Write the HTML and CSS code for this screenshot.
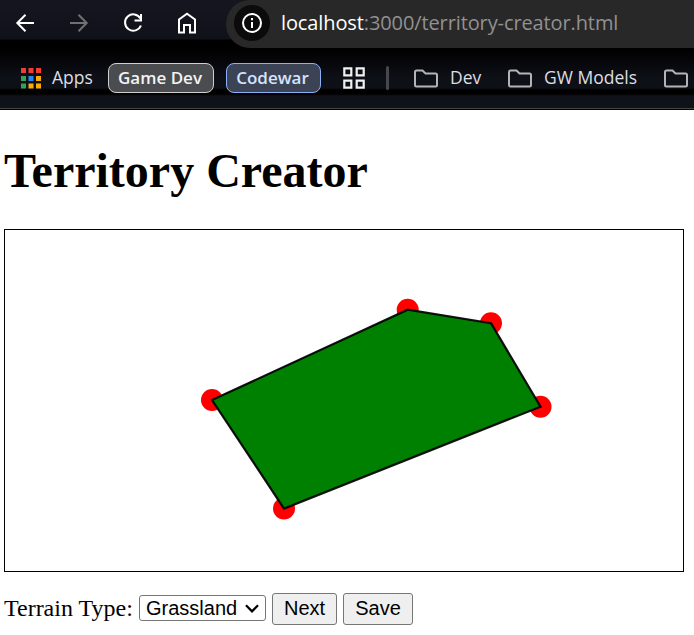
FILE: index.html
```html
<!DOCTYPE html>
<html lang="en">
<head>
<meta charset="utf-8">
<title>Territory Creator</title>
<link rel="stylesheet" href="styles.css">
</head>
<body>
<header class="browser">
  <nav class="toolbar">
    <svg class="nav-icons" width="226" height="46" viewBox="0 0 226 46" fill="none" stroke="#fff" stroke-width="2">
      <path d="M34 23H18M25.500 14.800L17.300 23L25.500 31.200"/>
      <path stroke="#707175" d="M70 23H86M78.500 14.800L86.700 23L78.500 31.200"/>
      <path d="M140.400 18.500A8.200 8.200 0 1 0 140.900 25.500M141 14V20.500H134.500"/>
      <path d="M179 32.500V19.500L187 13.700L195 19.500V32.500H190V25H184V32.500Z"/>
    </svg>
    <div class="address">
      <span class="site-info">
        <svg width="20" height="20" viewBox="0 0 20 20" fill="none" stroke="#fff" stroke-width="2"><circle cx="10" cy="10" r="9"/><path d="M10 9V15M10 5V7.200"/></svg>
      </span>
      <span class="url"><span class="host">localhost</span>:3000/territory-creator.html</span>
    </div>
  </nav>
  <nav class="bookmarks">
    <svg class="apps-icon" width="20" height="21" viewBox="0 0 20 21">
      <path fill="#f03c35" d="M0 0h5v5H0zM7.500 0h5v5h-5zM15 0h5v5h-5z"/>
      <path fill="#34a156" d="M0 8h5v5H0zM0 15.500h5v5H0z"/>
      <path fill="#2787f5" d="M7.500 8h5v5h-5z"/>
      <path fill="#f9ab0b" d="M15 8h5v5h-5zM7.500 15.500h5v5h-5zM15 15.500h5v5h-5z"/>
    </svg>
    <span class="label apps">Apps</span>
    <span class="group game">Game Dev</span>
    <span class="group code">Codewar</span>
    <svg class="grid-icon" width="22" height="22" viewBox="0 0 22 22" fill="none" stroke="#f1f1f1" stroke-width="2.200"><path d="M1.300 1.300h7v7h-7zM13.700 1.300h7v7h-7zM1.300 13.700h7v7h-7zM13.700 13.700h7v7h-7z"/></svg>
    <span class="divider"></span>
    <svg class="folder" width="24" height="19" viewBox="0 0 24 19"><path d="M2.500 1.500H8.500L11.500 4.500H21.500Q23 4.500 23 6V16Q23 17.500 21.500 17.500H2.500Q1 17.500 1 16V3Q1 1.500 2.500 1.500Z"/></svg>
    <span class="label dev">Dev</span>
    <svg class="folder" width="24" height="19" viewBox="0 0 24 19"><path d="M2.500 1.500H8.500L11.500 4.500H21.500Q23 4.500 23 6V16Q23 17.500 21.500 17.500H2.500Q1 17.500 1 16V3Q1 1.500 2.500 1.500Z"/></svg>
    <span class="label models">GW Models</span>
    <svg class="folder" width="24" height="19" viewBox="0 0 24 19"><path d="M2.500 1.500H8.500L11.500 4.500H21.500Q23 4.500 23 6V16Q23 17.500 21.500 17.500H2.500Q1 17.500 1 16V3Q1 1.500 2.500 1.500Z"/></svg>
  </nav>
</header>
<main>
  <h1>Territory Creator</h1>
  <svg class="map" viewBox="0 0 678 341">
    <g fill="red"><circle cx="207" cy="170" r="11"/><circle cx="402.700" cy="79.700" r="11"/><circle cx="486" cy="93.200" r="11"/><circle cx="535.500" cy="176.700" r="11"/><circle cx="279" cy="278.500" r="11"/></g>
    <path fill="green" stroke="#000" stroke-opacity=".92" stroke-width="2.250" d="M207 170L402.700 79.700L486 93.200L535.500 176.700L279 278.500Z"/>
  </svg>
  <div class="controls">
    <label for="terrain">Terrain Type:</label>
    <span class="select">
      <select id="terrain"><option>Grassland</option></select>
      <svg class="chevron" width="14" height="9" viewBox="0 0 14 9" fill="none" stroke="#000" stroke-width="2.300"><path d="M1 1.300L7 7.300L13 1.300"/></svg>
    </span>
    <button class="next">Next</button>
    <button class="save">Save</button>
  </div>
</main>
</body>
</html>
```
FILE: styles.css
```css
* { box-sizing: border-box; }
body { margin: 0; background: #fff; color: #000; font-family: "Liberation Serif", serif; overflow: hidden; }
svg { display: block; flex: none; }

.browser {
  height: 110px;
  overflow: hidden;
  background: linear-gradient(#15161f 0, #10121a 39px, #000 40px, #000 48px, #0e1018 78px, #0e1018 88px, #000 90px, #000 94px, #10121a 96px, #10121a 108px, #474244 108px, #474244 109px, #000 109px);
  font-family: "Open Sans", "Noto Sans", sans-serif;
}
.toolbar { display: flex; height: 48px; }
.address {
  flex: 1;
  display: flex;
  align-items: center;
  height: 48px;
  padding: 0 0 2px 8px;
  border-radius: 25px 0 0 25px;
  background: #282828;
  white-space: nowrap;
}
.site-info {
  display: flex;
  align-items: center;
  justify-content: center;
  width: 36px;
  height: 36px;
  border-radius: 50%;
  background: #0b0b0c;
}
.url { margin-left: 11px; color: #919191; font-size: 20px; letter-spacing: -0.11px; line-height: 28px; }
.host { color: #fff; }

.bookmarks { display: flex; align-items: center; height: 60px; padding-left: 21px; white-space: nowrap; }
.label { color: #dedee0; font-size: 17.5px; line-height: 24px; flex: none; padding-bottom: 2px; }
.apps { width: 56px; margin-left: 11px; }
.group {
  display: flex;
  align-items: center;
  justify-content: center;
  flex: none;
  height: 30px;
  padding: 0 2px 2px 0;
  border: 1.5px solid #d0d0d0;
  border-radius: 8px;
  font-size: 17px;
  font-weight: 600;
}
.game { width: 106px; background: #4b4c4f; color: #f3f3f3; }
.code { width: 95px; margin-left: 12px; background: #3c4354; border-color: #8ab0f8; color: #d6e4ff; }
.grid-icon { margin-left: 22px; }
.divider { flex: none; width: 3px; height: 24px; margin: 0 25px 0 21px; border-radius: 2px; background: #47484d; }
.folder { fill: none; stroke: #b4b4b4; stroke-width: 2; }
.dev { width: 58px; margin-left: 12px; }
.models { width: 108px; margin-left: 12px; }
.models + .folder { margin-left: 12px; }

main { padding: 0 4px; }
h1 { margin: 33px 0 31px; font-size: 48px; line-height: 55px; }
.map { width: 680px; height: 343px; border: 1px solid #000; }
.controls { display: flex; align-items: center; height: 32px; margin-top: 21px; font-size: 24px; }
label { width: 135px; padding-bottom: 2px; line-height: 28px; white-space: nowrap; }
.select { position: relative; width: 127px; height: 26px; margin-bottom: 2px; }
select {
  display: block;
  width: 127px;
  height: 26px;
  padding: 0 0 0 6px;
  appearance: none;
  border: 1px solid #767676;
  border-radius: 3px;
  background: #fff;
  color: #000;
  font: 20px/23px "Liberation Sans", sans-serif;
}
.chevron { position: absolute; right: 7px; top: 9px; }
button {
  height: 32px;
  padding: 0 0 2px;
  border: 1px solid #767676;
  border-radius: 3px;
  background: #efefef;
  color: #000;
  font: 20px/23px "Liberation Sans", sans-serif;
}
.next { width: 65px; margin-left: 6px; }
.save { width: 70px; margin-left: 6px; }
```
